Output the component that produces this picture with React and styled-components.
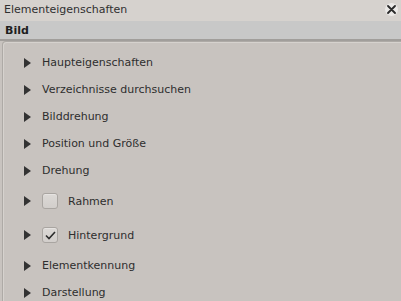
import React from "react";
import styled, { createGlobalStyle } from "styled-components";

const Global = createGlobalStyle`
  html, body { margin: 0; padding: 0; }
  body {
    width: 401px; height: 301px; overflow: hidden;
    background: #c8c3bf;
    font-family: "DejaVu Sans", "Liberation Sans", sans-serif;
    font-size: 11px;
    color: #2f2f2f;
  }
`;

const Window = styled.div`
  width: 401px;
  height: 301px;
  display: flex;
  flex-direction: column;
  background: #c8c3bf;
  overflow: hidden;
`;

const TitleBar = styled.div`
  height: 21px;
  flex: none;
  display: flex;
  align-items: center;
  justify-content: space-between;
  padding: 0 3px 2px 4px;
  box-sizing: border-box;
  background: #d6d2ce;
  font-size: 11px;
  color: #303030;
`;

const CloseBtn = styled.div`
  width: 13px;
  height: 13px;
  border-radius: 50%;
  background: #ebe9e7;
  display: flex;
  align-items: center;
  justify-content: center;
`;

const SectionBar = styled.div`
  height: 18px;
  flex: none;
  display: flex;
  align-items: center;
  padding-left: 5px;
  background: #c8c8c8;
  font-weight: bold;
  font-size: 11px;
  color: #1e1e1e;
  border-bottom: 2px solid #a19e9b;
`;

const Panel = styled.div`
  flex: 1;
  margin-left: 2px;
  margin-right: -6px;
  border: 1px solid #aeaaa6;
  border-bottom: none;
  border-top-left-radius: 4px;
  box-shadow: inset 1px 1px 0 #d6d2ce;
  padding-top: 7px;
  display: flex;
  flex-direction: column;
`;

const Row = styled.div`
  height: ${(p) => (p.$check ? 34 : 27)}px;
  display: flex;
  align-items: center;
  padding-left: 21px;
  flex: none;
`;

const Arrow = styled.span`
  width: 0;
  height: 0;
  border-top: 5px solid transparent;
  border-bottom: 5px solid transparent;
  border-left: 7px solid #333333;
  margin-right: 11px;
  flex: none;
`;

const Label = styled.span`
  color: #2e2e2e;
  white-space: nowrap;
`;

const Box = styled.span`
  width: 14px;
  height: 14px;
  border: 1px solid #a9a5a1;
  border-radius: 3px;
  background: linear-gradient(#dcd9d6, #d2cecb);
  box-shadow: inset 0 1px 0 #e6e3e1;
  display: flex;
  align-items: center;
  justify-content: center;
  margin-right: 10px;
  flex: none;
`;

const items = [
  { t: "Haupteigenschaften" },
  { t: "Verzeichnisse durchsuchen" },
  { t: "Bilddrehung" },
  { t: "Position und Größe" },
  { t: "Drehung" },
  { t: "Rahmen", check: true, on: false },
  { t: "Hintergrund", check: true, on: true },
  { t: "Elementkennung" },
  { t: "Darstellung" },
];

export default function App() {
  return (
    <Window>
      <Global />
      <TitleBar>
        <span>Elementeigenschaften</span>
        <CloseBtn>
          <svg width="9" height="9" viewBox="0 0 9 9">
            <path d="M1 1L8 8M8 1L1 8" stroke="#2a2a2a" strokeWidth="1.8" strokeLinecap="round" />
          </svg>
        </CloseBtn>
      </TitleBar>
      <SectionBar>Bild</SectionBar>
      <Panel>
        {items.map((it) => (
          <Row key={it.t} $check={it.check}>
            <Arrow />
            {it.check && (
              <Box>
                {it.on && (
                  <svg width="11" height="9" viewBox="0 0 11 9">
                    <path d="M1 4.5L4 7.5L10 1" fill="none" stroke="#2c2c2c" strokeWidth="1.6" />
                  </svg>
                )}
              </Box>
            )}
            <Label>{it.t}</Label>
          </Row>
        ))}
      </Panel>
    </Window>
  );
}
